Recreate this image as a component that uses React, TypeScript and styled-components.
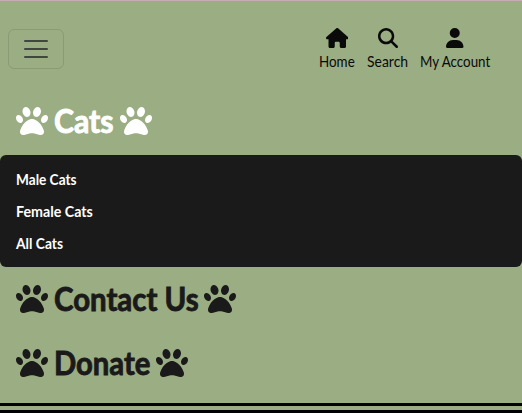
import React, { useLayoutEffect, useRef } from 'react';
import styled, { createGlobalStyle } from 'styled-components';
import { FaHouse, FaMagnifyingGlass, FaPaw, FaUser } from 'react-icons/fa6';

const GlobalStyle = createGlobalStyle`
  * { box-sizing: border-box; }
  body {
    margin: 0;
    overflow: hidden;
    background: #9aad83;
    font-family: Lato, 'Open Sans', sans-serif;
    font-size: 16px;
    line-height: 24px;
    color: #0a0a0a;
  }
`;

const Page = styled.div`
  border-top: 1px solid #c9abb2;
`;

const Navbar = styled.nav`
  display: flex;
  flex-direction: column;
  height: 405px;
  border-bottom: 3px solid #000;
`;

const TopRow = styled.div`
  display: flex;
  justify-content: space-between;
  align-items: flex-start;
  height: 88px;
  padding: 25px 32px 0 8px;
`;

const Toggler = styled.button`
  display: flex;
  width: 56px;
  height: 40px;
  margin-top: 3px;
  padding: 4px 12px;
  border: 1px solid rgba(0, 0, 0, 0.1);
  border-radius: 6px;
  background: transparent;
`;

const Shortcuts = styled.div`
  display: flex;
  gap: 12px;
`;

const Shortcut = styled.a<{ $iconWidth: number }>`
  display: flex;
  flex-direction: column;
  align-items: center;
  color: #0a0a0a;
  text-decoration: none;
  > svg {
    display: block;
    flex: none;
    width: ${p => p.$iconWidth}px;
    height: 20px;
    margin: 2px 0 1px;
  }
`;

const Heading = styled.a<{ $active?: boolean }>`
  display: flex;
  align-items: center;
  gap: 6px;
  height: 64px;
  padding: 0 16px;
  font-size: 32px;
  font-weight: 700;
  line-height: 48px;
  color: ${p => (p.$active ? '#fff' : '#1a1a1a')};
  text-decoration: none;
  -webkit-text-stroke: 0.9px currentColor;
  stroke-linejoin: round;
  > svg { flex: none; }
`;

const Menu = styled.div`
  margin-top: 2px;
  padding: 8px 0;
  border-radius: 6px;
  background: #1a1a1a;
`;

const MenuItem = styled.a`
  display: block;
  height: 32px;
  padding: 4px 16px;
  color: #fff;
  font-weight: 700;
  text-decoration: none;
`;

const FooterLine = styled.div`
  height: 3px;
  margin-top: 4px;
  background: #000;
`;

const LabelBox = styled.span<{ $width: number }>`
  display: block;
  width: ${p => p.$width}px;
  white-space: nowrap;
`;

const LabelText = styled.span`
  display: inline-block;
  transform-origin: left center;
`;

/* Condenses a label to the given width. */
function Label({ width, children }: { width: number; children: string }) {
  const ref = useRef<HTMLSpanElement>(null);
  useLayoutEffect(() => {
    const el = ref.current;
    if (el) el.style.transform = `scaleX(${width / el.offsetWidth})`;
  }, [width, children]);
  return (
    <LabelBox $width={width}>
      <LabelText ref={ref}>{children}</LabelText>
    </LabelBox>
  );
}

function PawHeading({ text, width, active }: { text: string; width: number; active?: boolean }) {
  return (
    <Heading $active={active}>
      <FaPaw size={32} />
      <Label width={width}>{text}</Label>
      <FaPaw size={32} />
    </Heading>
  );
}

export default function App() {
  return (
    <>
      <GlobalStyle />
      <Page>
        <Navbar>
          <TopRow>
            <Toggler aria-label="Toggle navigation">
              <svg width="30" height="30" viewBox="0 0 30 30" fill="none">
                <path
                  d="M4 7h22M4 15h22M4 23h22"
                  stroke="rgba(33,37,41,0.75)"
                  strokeWidth="2"
                  strokeLinecap="round"
                />
              </svg>
            </Toggler>
            <Shortcuts>
              <Shortcut $iconWidth={22.5}>
                <FaHouse />
                <Label width={36}>Home</Label>
              </Shortcut>
              <Shortcut $iconWidth={20}>
                <FaMagnifyingGlass />
                <Label width={41}>Search</Label>
              </Shortcut>
              <Shortcut $iconWidth={17.5}>
                <FaUser />
                <Label width={70}>My Account</Label>
              </Shortcut>
            </Shortcuts>
          </TopRow>
          <PawHeading text="Cats" width={59.5} active />
          <Menu>
            <MenuItem><Label width={60.5}>Male Cats</Label></MenuItem>
            <MenuItem><Label width={76.5}>Female Cats</Label></MenuItem>
            <MenuItem><Label width={47.5}>All Cats</Label></MenuItem>
          </Menu>
          <PawHeading text="Contact Us" width={144.3} />
          <PawHeading text="Donate" width={96} />
        </Navbar>
        <FooterLine />
      </Page>
    </>
  );
}
